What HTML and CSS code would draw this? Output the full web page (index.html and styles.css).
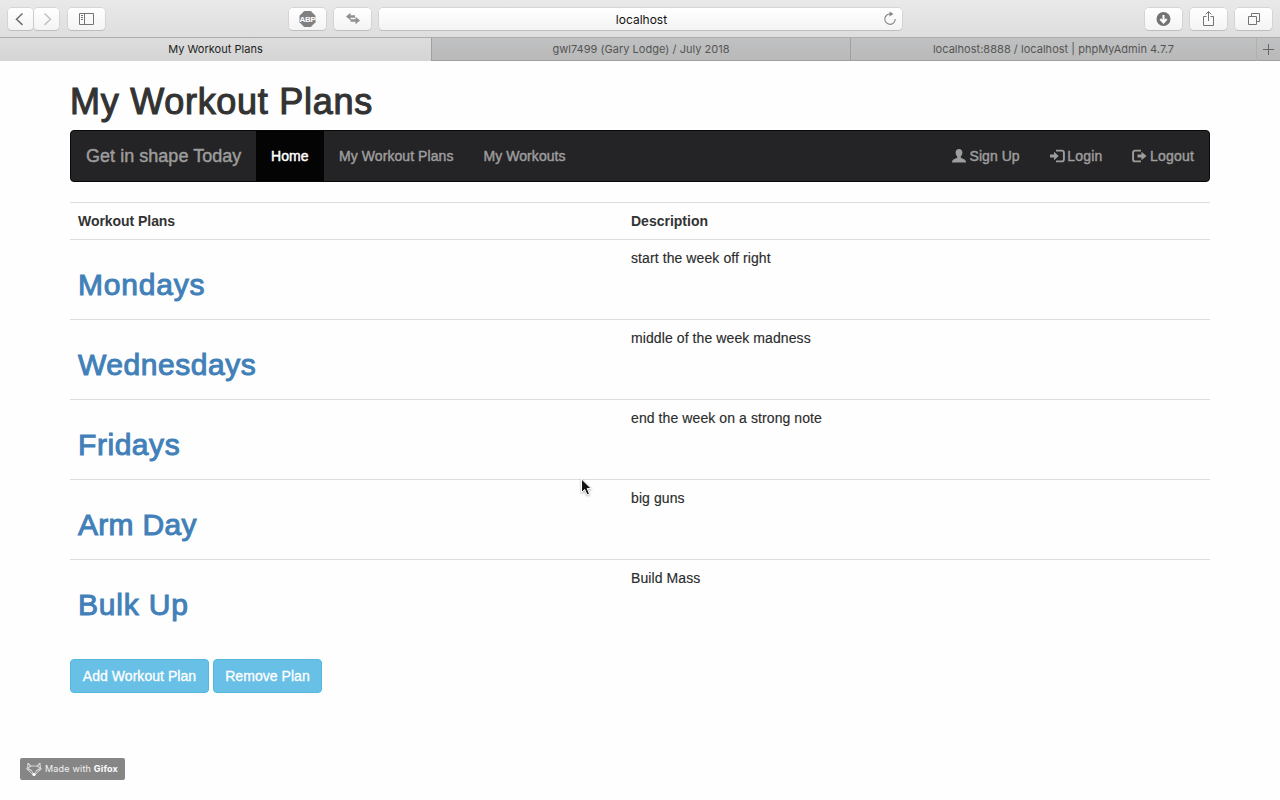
FILE: index.html
```html
<!DOCTYPE html>
<html lang="en">
<head>
<meta charset="utf-8">
<title>My Workout Plans</title>
<link rel="stylesheet" href="styles.css">
</head>
<body>
<header class="browser">
  <div class="toolbar">
    <div class="group group-left">
      <span class="tool tool-back"><svg width="25" height="22" viewBox="0 0 25 22"><path d="M14.500 5.500 8.500 11.200l6 5.700" fill="none" stroke="#6e6e6e" stroke-width="1.500"/></svg></span>
      <span class="tool tool-back"><svg width="25" height="22" viewBox="0 0 25 22"><path d="m10.500 5.500 6 5.700-6 5.700" fill="none" stroke="#c2c2c2" stroke-width="1.500"/></svg></span>
      <span class="tool tool-side"><svg width="37" height="22" viewBox="0 0 37 22"><path d="M11.500 5.500h14v11h-14zM16.500 5.500v11M13 7.500h2M13 9.500h2M13 11.500h2" fill="none" stroke="#747474"/></svg></span>
    </div>
    <div class="group group-center">
      <span class="tool"><svg width="37" height="22" viewBox="0 0 37 22"><path d="M15.200 3h6.600L26.500 7.700v6.600L21.800 19h-6.600l-4.700-4.700V7.700z" fill="#808080"/><text class="abp" x="18.500" y="13.700" text-anchor="middle">ABP</text></svg></span>
      <span class="tool"><svg width="37" height="22" viewBox="0 0 37 22"><path d="m12 8.500 4.500-3.700v2.400h4.500v2.600h-4.500v2.400zM26 12.500l-4.500-3.700v2.400h-5v2.600h5v2.400z" fill="#909090"/></svg></span>
      <div class="address"><span>localhost</span><svg class="reload" width="14" height="16" viewBox="0 0 14 16"><path d="M7.500 3a5.200 5.200 0 1 0 4.700 5" fill="none" stroke="#858585" stroke-width="1.100"/><path d="M6.500.500v5l4-2.500z" fill="#858585"/></svg></div>
    </div>
    <div class="group group-right">
      <span class="tool"><svg width="37" height="22" viewBox="0 0 37 22"><circle cx="18.500" cy="11" r="7" fill="#737373"/><path d="M18.500 7v7M15.300 11l3.200 3.500 3.200-3.500" fill="none" stroke="#fff" stroke-width="2"/></svg></span>
      <span class="tool"><svg width="37" height="22" viewBox="0 0 37 22"><path d="M16.500 8.500h-3v9h10v-9h-3M18.500 13V3.500M15.800 6.300l2.700-2.800 2.700 2.800" fill="none" stroke="#747474"/></svg></span>
      <span class="tool"><svg width="37" height="22" viewBox="0 0 37 22"><path d="M13.500 8.500h8v8h-8zM16.500 8.500v-3h8v8h-3" fill="none" stroke="#747474"/></svg></span>
    </div>
  </div>
  <nav class="tabs">
    <span class="tab tab-active">My Workout Plans</span>
    <span class="tab">gwl7499 (Gary Lodge) / July 2018</span>
    <span class="tab">localhost:8888 / localhost | phpMyAdmin 4.7.7</span>
    <span class="tab tab-new"><svg width="13" height="13" viewBox="0 0 13 13"><path d="M1 6.500h11M6.500 1v11" stroke="#666"/></svg></span>
  </nav>
</header>

<main class="container">
  <h1 class="title">My Workout Plans</h1>
  <nav class="navbar">
    <a class="brand">Get in shape Today</a>
    <a class="link link-active">Home</a>
    <a class="link">My Workout Plans</a>
    <a class="link">My Workouts</a>
    <div class="nav-right">
      <a class="link link-signup"><svg class="glyph" viewBox="0 0 14 14"><path d="M7 0c2.200 0 3.400 1.500 3.400 3.600 0 1.600-.7 3.200-1.600 4v1.200c1.200.8 3.300 1.300 4.300 2.200.6.500.9 1.300.9 2.600H0c0-1.300.3-2.100.9-2.600 1-.9 3.100-1.400 4.300-2.200V7.600C4.300 6.800 3.600 5.200 3.600 3.600 3.600 1.500 4.800 0 7 0z"/></svg> Sign Up</a>
      <a class="link"><svg class="glyph" viewBox="0 0 14 14"><path d="M0 5.500h4V2.800L8.700 7 4 11.200V8.500H0z"/><path d="M6 1.600h6a1.900 1.900 0 0 1 1.900 1.900v7a1.900 1.900 0 0 1-1.900 1.900H6" fill="none" stroke="currentColor" stroke-width="1.900"/></svg> Login</a>
      <a class="link"><svg class="glyph" viewBox="0 0 14 14"><path d="M5.500 5.500h4V2.800L14.500 7l-5 4.200V8.500h-4z"/><path d="M9 1.600H3a1.900 1.900 0 0 0-1.900 1.900v7A1.900 1.900 0 0 0 3 12.400h6" fill="none" stroke="currentColor" stroke-width="1.900"/></svg> Logout</a>
    </div>
  </nav>

  <table class="plans">
    <thead><tr><th class="col-plan">Workout Plans</th><th>Description</th></tr></thead>
    <tbody>
      <tr><td><h2 class="plan plan-wide">Mondays</h2></td><td>start the week off right</td></tr>
      <tr><td><h2 class="plan">Wednesdays</h2></td><td>middle of the week madness</td></tr>
      <tr><td><h2 class="plan">Fridays</h2></td><td>end the week on a strong note</td></tr>
      <tr><td><h2 class="plan plan-tight">Arm Day</h2></td><td>big guns</td></tr>
      <tr><td><h2 class="plan plan-wide">Bulk Up</h2></td><td>Build Mass</td></tr>
    </tbody>
  </table>

  <div class="actions">
    <button class="btn btn-add">Add Workout Plan</button>
    <button class="btn btn-remove">Remove Plan</button>
  </div>
</main>

<div class="badge">
  <svg width="16" height="15" viewBox="0 0 16 15"><path d="M2 1 1.500 6l-.8 1L8 13.500 15.300 7l-.8-1L14 1l-3.500 3h-5zM5.500 4 1.500 6l4 2.500L8 13l2.500-4.500 4-2.500-4-2M.7 7l4.800 1.500M15.300 7l-4.800 1.500M2 1l2 4M14 1l-2 4" fill="none" stroke="#e6e6e6" stroke-width=".8"/><circle cx="8" cy="12.500" r="1.600" fill="#fff"/></svg>
  <span class="badge-text">Made with <b>Gifox</b></span>
</div>
<svg class="cursor" width="14" height="20" viewBox="0 0 14 20"><path d="M1.500 1v13.500l3.200-3 2.300 5.300 2.500-1-2.300-5.200h4z" fill="#111" stroke="#fff"/></svg>
</body>
</html>
```
FILE: styles.css
```css
* { box-sizing: border-box; }

body {
  margin: 0;
  height: 800px;
  overflow: hidden;
  background: #fefefe;
  color: #333;
  font: 14px/20px "Liberation Sans", Arial, sans-serif;
}

svg { display: block; }

/* Browser window */
.browser { font-family: Inter, sans-serif; }

.toolbar {
  display: flex;
  justify-content: space-between;
  height: 37px;
  padding: 8px 8px 0 8px;
  background: linear-gradient(#e9e9ea, #dedede);
}

.group { display: flex; }
.group-left { width: 281px; gap: 1px; }
.group-center { flex: 1; gap: 8px; }
.group-right { gap: 8px; }

.tool {
  display: block;
  width: 37px;
  height: 22px;
  border-radius: 4px;
  background: linear-gradient(#fff, #f4f4f4);
  box-shadow: 0 0 0 .5px #c4c4c4, 0 1px 0 #b9b9b9;
}
.tool-back { width: 25px; }
.tool-side { margin-left: 8px; }
.abp { font: bold 8px "Liberation Sans", sans-serif; letter-spacing: -.3px; fill: #fff; }

.address {
  position: relative;
  width: 523px;
  height: 22px;
  border-radius: 4px;
  background: linear-gradient(#fff, #f4f4f4);
  box-shadow: 0 0 0 .5px #c4c4c4, 0 1px 0 #b9b9b9;
  color: #111;
  font-size: 12px;
  line-height: 23px;
  padding-left: 2px;
  text-align: center;
}
.reload { position: absolute; right: 5px; top: 3px; }

.tabs {
  display: grid;
  grid-template-columns: 432px 419px 406px 23px;
  height: 24px;
  border-top: 1px solid #adadad;
  border-bottom: 1px solid #a0a0a0;
  background: linear-gradient(#c0c1c2, #b9b9b9);
}
.tab {
  border-right: 1px solid #a0a0a0;
  color: #555;
  font-size: 11px;
  letter-spacing: .03px;
  line-height: 23px;
  text-align: center;
}
.tab-active {
  background: linear-gradient(#dddddd, #d4d4d4);
  color: #222;
}
.tab:nth-child(3) { border-color: #b0b0b0; }
.tab-new { border: 0; padding: 5px 0 0 5px; }

/* Page */
.container { width: 1140px; margin: 0 auto; }

.title {
  margin: 21px 0 8px;
  font-size: 36px;
  font-weight: 400;
  letter-spacing: .72px;
  line-height: 40px;
  -webkit-text-stroke: 1.1px #333;
}

.navbar {
  display: flex;
  height: 52px;
  border: 1px solid #080808;
  border-radius: 4px;
  background: #242325;
  color: #9d9d9d;
}
.brand {
  width: 185px;
  padding: 15px 0 15px 15px;
  font-size: 18px;
  letter-spacing: .03px;
  white-space: nowrap;
  -webkit-text-stroke: .45px #9d9d9d;
}
.link {
  padding: 15px;
  letter-spacing: .07px;
  white-space: nowrap;
  -webkit-text-stroke: .45px currentColor;
}
.link-active { width: 68px; background: #040404; color: #fff; }
.nav-right { display: flex; margin-left: auto; }
.nav-right .link { letter-spacing: .2px; }
.nav-right .link-signup { letter-spacing: .05px; }
.glyph {
  display: inline-block;
  width: 14px;
  height: 14px;
  margin-right: -.6px;
  vertical-align: -2px;
  overflow: visible;
  fill: currentColor;
}

.plans {
  width: 100%;
  margin: 20px 0;
  border-collapse: separate;
  border-spacing: 0;
  table-layout: fixed;
}
.plans th,
.plans td {
  padding: 8px;
  border-top: 1px solid #ddd;
  text-align: left;
  vertical-align: top;
}
.plans .col-plan { width: 553px; letter-spacing: -.05px; }
.plans td {
  height: 80px;
  color: #2c2c2c;
  letter-spacing: .09px;
  -webkit-text-stroke: .15px #2c2c2c;
}

.plan {
  margin: 20px 0 10px;
  color: #4180b8;
  font-size: 30px;
  font-weight: 400;
  letter-spacing: .55px;
  line-height: 33px;
  -webkit-text-stroke: 1px #4180b8;
}
.plan-wide { letter-spacing: .8px; }
.plan-tight { letter-spacing: .3px; }

.actions { display: flex; gap: 4px; }
.btn {
  height: 34px;
  padding: 0;
  border: 1px solid #52b9dc;
  border-radius: 4px;
  background: #69c0e7;
  color: #fff;
  font: 14px/20px "Liberation Sans", Arial, sans-serif;
  letter-spacing: .05px;
  -webkit-text-stroke: .3px #fff;
}
.btn-add { width: 139px; }
.btn-remove { width: 109px; }

.badge {
  position: absolute;
  left: 20px;
  top: 758px;
  display: flex;
  align-items: center;
  gap: 3px;
  width: 105px;
  height: 22px;
  padding-left: 6px;
  border-radius: 2px;
  background: #868686;
  color: #f2f2f2;
  font: 9px/22px Inter, sans-serif;
  letter-spacing: .2px;
  white-space: nowrap;
}
.badge b { color: #fff; }

.cursor {
  position: absolute;
  left: 580px;
  top: 478px;
  filter: drop-shadow(0 1px 1px #0005);
}
```
